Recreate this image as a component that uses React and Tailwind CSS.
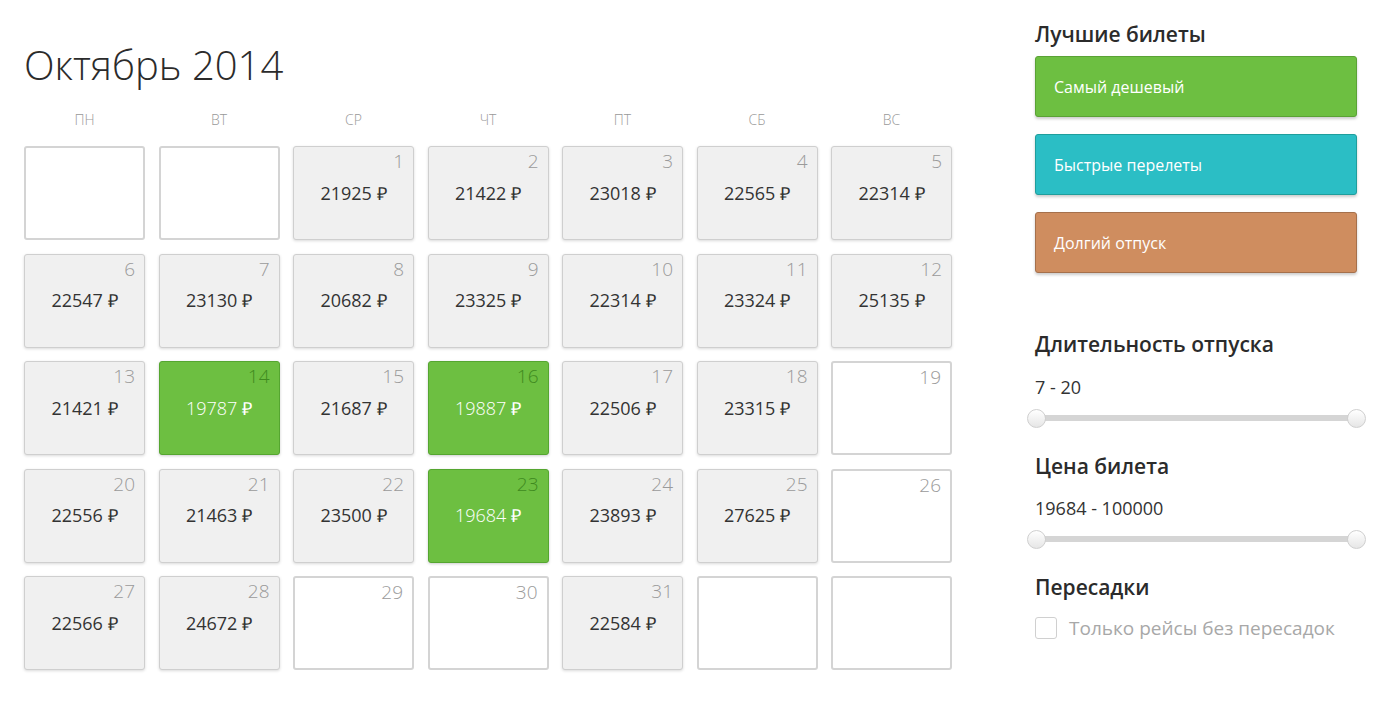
import { useState } from "react";

const weekdays = ["ПН", "ВТ", "СР", "ЧТ", "ПТ", "СБ", "ВС"];

// prices by day, null = no data
const prices = {
  1: 21925, 2: 21422, 3: 23018, 4: 22565, 5: 22314,
  6: 22547, 7: 23130, 8: 20682, 9: 23325, 10: 22314, 11: 23324, 12: 25135,
  13: 21421, 14: 19787, 15: 21687, 16: 19887, 17: 22506, 18: 23315,
  20: 22556, 21: 21463, 22: 23500, 23: 19684, 24: 23893, 25: 27625,
  27: 22566, 28: 24672, 31: 22584,
};
const best = [14, 16, 23];

function buildCells() {
  const cells = [null, null];
  for (let d = 1; d <= 31; d++) cells.push(d);
  while (cells.length < 35) cells.push(null);
  return cells;
}

function DayCell({ day }) {
  if (day === null) {
    return <div className="h-[94px] rounded-[3px] border-2 border-[#d4d4d4] bg-white" />;
  }
  const price = prices[day];
  const isBest = best.includes(day);

  let box = "border-2 border-[#d4d4d4] bg-white";
  if (price && isBest) box = "border border-[#55a630] bg-[#6dbf41] shadow-[0_1px_3px_rgba(0,0,0,0.2)]";
  else if (price) box = "border border-[#cfcfcf] bg-[#f0f0f0] shadow-[0_1px_3px_rgba(0,0,0,0.15)]";

  return (
    <div className={`relative h-[94px] rounded-[3px] ${box}`}>
      <span
        className={`absolute right-[9px] top-[1px] text-[19px] font-light leading-[26px] ${
          isBest ? "text-[#3f8a1f]" : "text-[#9a9a9a]"
        }`}
      >
        {day}
      </span>
      {price && (
        <div className="flex h-full items-center justify-center">
          <span className={`text-[18px] ${isBest ? "font-light text-white" : "text-[#333]"}`}>
            {price} ₽
          </span>
        </div>
      )}
    </div>
  );
}

function RangeSlider() {
  return (
    <div className="relative mt-[9px] h-[20px] w-[322px]">
      <div className="absolute left-[2px] right-[2px] top-[7px] h-[6px] rounded-full bg-[#d5d5d5]" />
      <div className="absolute left-[-8px] top-[1px] h-[19px] w-[19px] rounded-full border border-[#cfcfcf] bg-gradient-to-b from-white to-[#e6e6e6]" />
      <div className="absolute right-[-9px] top-[1px] h-[19px] w-[19px] rounded-full border border-[#cfcfcf] bg-gradient-to-b from-white to-[#e6e6e6]" />
    </div>
  );
}

export default function App() {
  const [direct, setDirect] = useState(false);
  const cells = buildCells();

  return (
    <div className="flex min-h-screen bg-white pl-[24px] text-[#333] font-['Open_Sans','Liberation_Sans',sans-serif]">
      {/* Calendar */}
      <div className="w-[927px] pt-[41px]">
        <h1 className="text-[40px] font-light leading-[48px] text-[#2b2b2b]">Октябрь 2014</h1>

        <div className="mt-[21px] grid grid-cols-[repeat(7,121px)] gap-x-[13.5px]">
          {weekdays.map((w) => (
            <div key={w} className="text-center text-[14px] font-light leading-[20px] text-[#999]">
              {w}
            </div>
          ))}
        </div>

        <div className="mt-[16px] grid grid-cols-[repeat(7,121px)] gap-x-[13.5px] gap-y-[13.5px]">
          {cells.map((d, i) => (
            <DayCell key={i} day={d} />
          ))}
        </div>
      </div>

      {/* Filters */}
      <div className="ml-[84px] w-[322px] pt-[20px]">
        <h2 className="text-[21px] font-semibold leading-[28px] text-[#2b2b2b]">Лучшие билеты</h2>
        <div className="mt-[8px] flex flex-col gap-[17px]">
          <button className="h-[61px] rounded-[3px] border border-[#5aa235] bg-[#6dbf41] pl-[18px] text-left text-[16px] text-white shadow-[0_2px_3px_rgba(0,0,0,0.2)]">
            Самый дешевый
          </button>
          <button className="h-[61px] rounded-[3px] border border-[#1f9e9c] bg-[#2bbec5] pl-[18px] text-left text-[16px] text-white shadow-[0_2px_3px_rgba(0,0,0,0.2)]">
            Быстрые перелеты
          </button>
          <button className="h-[61px] rounded-[3px] border border-[#a5704c] bg-[#cf8d5f] pl-[18px] text-left text-[16px] text-white shadow-[0_2px_3px_rgba(0,0,0,0.2)]">
            Долгий отпуск
          </button>
        </div>

        <h2 className="mt-[57px] text-[21px] font-semibold leading-[28px] text-[#2b2b2b]">Длительность отпуска</h2>
        <div className="mt-[17px] text-[18px] leading-[24px] text-[#333]">7 - 20</div>
        <RangeSlider />

        <h2 className="mt-[24px] text-[21px] font-semibold leading-[28px] text-[#2b2b2b]">Цена билета</h2>
        <div className="mt-[16px] text-[18px] leading-[24px] text-[#333]">19684 - 100000</div>
        <RangeSlider />

        <h2 className="mt-[24px] text-[21px] font-semibold leading-[28px] text-[#2b2b2b]">Пересадки</h2>
        <label className="mt-[15px] flex cursor-pointer items-center gap-[12px]">
          <input
            type="checkbox"
            checked={direct}
            onChange={(e) => setDirect(e.target.checked)}
            className="h-[22px] w-[22px] appearance-none rounded-[3px] border border-[#d0d0d0] bg-white checked:bg-[#6dbf41]"
          />
          <span className="text-[19px] leading-[24px] text-[#a8a8a8]">Только рейсы без пересадок</span>
        </label>
      </div>
    </div>
  );
}
